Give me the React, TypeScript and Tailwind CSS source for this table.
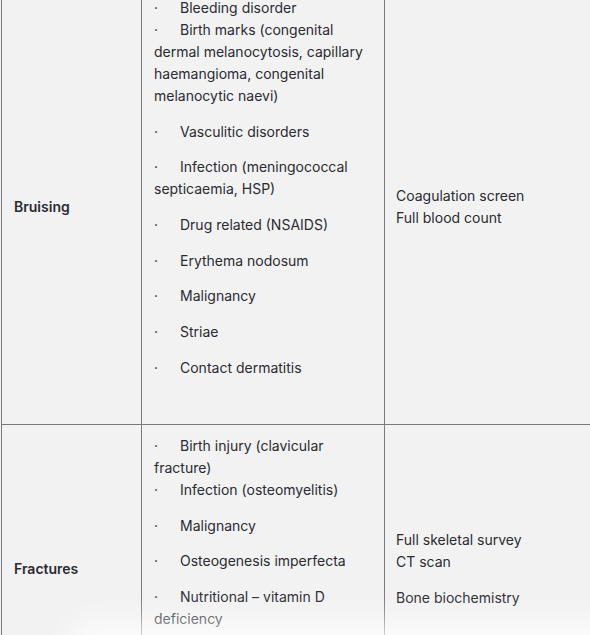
const bruisingCauses: string[][] = [
  ['Bleeding disorder', 'Birth marks (congenital dermal melanocytosis, capillary haemangioma, congenital melanocytic naevi)'],
  ['Vasculitic disorders'],
  ['Infection (meningococcal septicaemia, HSP)'],
  ['Drug related (NSAIDS)'],
  ['Erythema nodosum'],
  ['Malignancy'],
  ['Striae'],
  ['Contact dermatitis'],
];

const fractureCauses: string[][] = [
  ['Birth injury (clavicular fracture)', 'Infection (osteomyelitis)'],
  ['Malignancy'],
  ['Osteogenesis imperfecta'],
  ['Nutritional – vitamin D deficiency'],
];

function Bullet({ text }: { text: string }) {
  return (
    <span className="block">
      <span className="inline-block w-[26px]">·</span>
      {text}
    </span>
  );
}

function CauseList({ items }: { items: string[][] }) {
  return (
    <>
      {items.map((group, i) => (
        <p key={i} className="mb-[13.7px] last:mb-0">
          {group.map((t) => (
            <Bullet key={t} text={t} />
          ))}
        </p>
      ))}
    </>
  );
}

function Row({
  label,
  causes,
  tests,
  className,
  midClass,
}: {
  label: string;
  causes: string[][];
  tests: string[][];
  className: string;
  midClass: string;
}) {
  return (
    <div className={`flex border-b border-[#7a7a7a] ${className}`}>
      <div className="flex w-[140px] shrink-0 items-center border-l border-[#7a7a7a] pl-[12px]">
        <p className="font-semibold">{label}</p>
      </div>
      <div className={`w-[243px] shrink-0 border-l border-[#7a7a7a] pl-[12px] pr-2 ${midClass}`}>
        <CauseList items={causes} />
      </div>
      <div className="flex flex-1 flex-col justify-center border-l border-[#7a7a7a] pl-[11px]">
        {tests.map((group, i) => (
          <p key={i} className="mb-[13.7px] last:mb-0">
            {group.map((t) => (
              <span key={t} className="block">
                {t}
              </span>
            ))}
          </p>
        ))}
      </div>
    </div>
  );
}

export default function App() {
  return (
    <div
      className="relative h-[635px] w-[590px] overflow-hidden bg-[#f2f2f2] text-[14px] leading-[22px] text-[#2b2b31]"
      style={{ fontFamily: 'Inter, "Noto Sans", sans-serif' }}
    >
      <div className="-mt-[11px] pl-px w-[620px]">
        <Row
          label="Bruising"
          causes={bruisingCauses}
          tests={[['Coagulation screen', 'Full blood count']]}
          className="h-[436px]"
          midClass="pt-[8px]"
        />
        <Row
          label="Fractures"
          causes={fractureCauses}
          tests={[['Full skeletal survey', 'CT scan'], ['Bone biochemistry']]}
          className="h-[289px]"
          midClass="pt-[10px]"
        />
      </div>
      <div className="pointer-events-none absolute -bottom-[24px] left-[80px] right-[-40px] h-[24px] rounded-[30px] bg-white shadow-[0_0_30px_14px_rgba(255,255,255,0.75)]" />
    </div>
  );
}
